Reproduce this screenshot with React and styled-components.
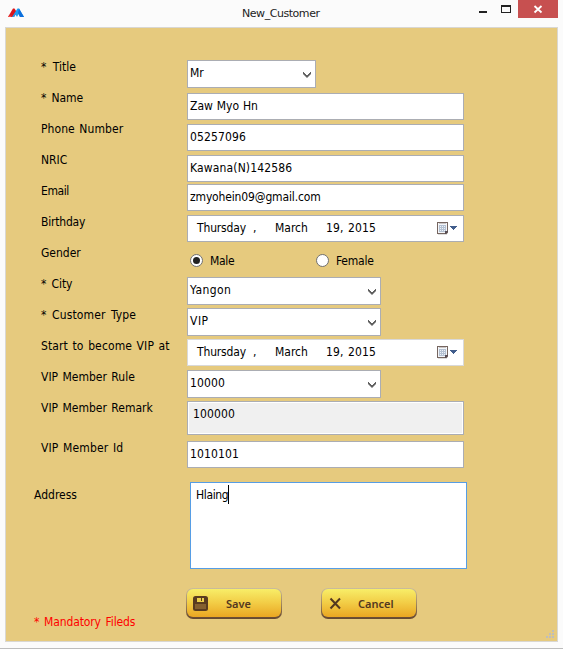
import React from 'react';
import styled, { createGlobalStyle } from 'styled-components';

const Global = createGlobalStyle`
  * { box-sizing: border-box; }
  body { margin: 0; background: #fbfbfb; overflow: hidden; }
  svg { display: block; flex: none; }
`;

const Window = styled.div`
  display: flex;
  flex-direction: column;
  width: 563px;
  height: 649px;
  background: #fbfbfb;
  border-bottom: 1px solid #bdbdbd;
  color: #000;
  font: 12px/16px 'DejaVu Sans Condensed', 'Noto Sans', sans-serif;
  white-space: pre;
`;
const TitleBar = styled.header`
  display: flex;
  align-items: flex-start;
  height: 27px;
  padding-left: 8px;
`;
const Logo = styled.svg`
  margin-top: 8px;
`;
const Caption = styled.h1`
  margin: 6px 0 0 218px;
  width: 216px;
  color: #222;
  font: 11px/16px 'DejaVu Sans', sans-serif;
  letter-spacing: -0.45px;
`;
const WindowButton = styled.div`
  width: ${(p) => p.$w}px;
  height: 18px;
  background: ${(p) => p.$bg || 'transparent'};
`;
const Form = styled.main`
  display: flex;
  flex-direction: column;
  width: 553px;
  height: 615px;
  margin-left: 5px;
  padding: 32px 0 0 28px;
  background: #e6ca7e;
  border: 1px solid #d9d7d2;
`;
const Row = styled.div`
  display: flex;
  align-items: flex-start;
  height: ${(p) => p.$h || 31}px;
`;
const Text = styled.span`
  letter-spacing: ${(p) => p.$ls || 0}px;
  word-spacing: ${(p) => p.$ws || 0}px;
`;
const Label = styled(Text)`
  width: ${(p) => (p.$outdent ? 156 : 146)}px;
  margin-left: ${(p) => (p.$outdent ? 0 : 7)}px;
  margin-top: ${(p) => (p.$outdent ? 5 : -1)}px;
`;
const Field = styled.div`
  display: flex;
  align-items: flex-start;
  width: ${(p) => p.$w || 277}px;
  height: ${(p) => p.$h || 27}px;
  margin-top: ${(p) => p.$dy || 0}px;
  padding: ${(p) => p.$pad || '4px 0 0 2px'};
  background: #fff;
  border: 1px solid ${(p) => p.$line || '#abadb3'};
`;
const ReadOnlyField = styled(Field)`
  background: #f0f0f0;
  box-shadow: inset 0 0 0 1px #fff;
`;
const Select = styled(Field)`
  justify-content: space-between;
`;
const Chevron = styled.svg`
  margin: 7px 4px 0 0;
`;
const DatePart = styled(Text)`
  width: ${(p) => p.$w}px;
`;
const Calendar = styled.svg`
  margin-top: 2px;
`;
const Choice = styled.div`
  display: flex;
  width: 126px;
  margin: 8px 0 0 3px;
  & + & { margin-left: 0; }
`;
const Radio = styled.span`
  display: grid;
  place-items: center;
  width: 13px;
  height: 13px;
  margin: 0 7px 0 0;
  border: 1px solid #707070;
  border-radius: 50%;
  background: #fff;
  &::after {
    content: '';
    width: 7px;
    height: 7px;
    border-radius: 50%;
    background: ${(p) => (p.$on ? '#222' : 'transparent')};
  }
`;
const ChoiceText = styled(Text)`
  margin-top: -1px;
`;
const AddressBox = styled(Field)`
  border-color: #569de5;
`;
const Caret = styled.i`
  width: 1px;
  height: 19px;
  margin-top: -2px;
  background: #000;
`;
const Footer = styled.footer`
  display: flex;
  align-items: flex-start;
  flex: 1;
  margin-top: 19px;
`;
const Note = styled(Text)`
  width: 152px;
  margin-top: 26px;
  color: #f00;
`;
const Button = styled.div`
  display: flex;
  align-items: center;
  width: 96px;
  height: 31px;
  margin-right: 39px;
  padding: 1px 1px 2px;
  border-radius: 7px;
  background: linear-gradient(#cbbd9b, #a2885f 50%, #65472f);
`;
const Face = styled.div`
  display: flex;
  align-items: center;
  width: 100%;
  height: 100%;
  padding-left: 6px;
  border-radius: 6px;
  background: linear-gradient(#f8ee68, #f2cc45 50%, #eaa622);
  color: #533820;
  font: 600 11px/16px 'Noto Sans', sans-serif;
`;
const ButtonText = styled(Text)`
  margin: 2px 0 0 ${(p) => p.$gap}px;
`;
const Grip = styled.svg`
  margin: 42px 0 0 auto;
`;

const Arrow = () => (
  <Chevron width="8" height="7" viewBox="0 0 8 7" fill="#606060">
    <path d="M0 0h1v1h1v1h1v1h2V2h1V1h1V0h1v2.600H7v1H6v1H5v1H3v-1H2v-1H1v-1H0z" />
  </Chevron>
);

const CalendarIcon = () => (
  <Calendar width="21" height="14" viewBox="0 0 21 14" shapeRendering="crispEdges">
    <rect x="1" y="12" width="9" height="1" fill="#ddd" />
    <rect x="0" y="0" width="11" height="12" fill="#75655f" />
    <rect x="1" y="1" width="9" height="10" fill="#f4f6f9" />
    <rect x="2" y="1" width="7" height="1" fill="#c9c5c5" />
    <rect x="2" y="3" width="7" height="7" fill="#b4c1d2" />
    <g fill="#eef2f8">
      {[3, 5, 7].flatMap((x) => [4, 6, 8].map((y) => <rect key={`${x}-${y}`} x={x} y={y} width="1" height="1" />))}
    </g>
    <path d="M8 11V9h3v1h-1v1H9v1H8z" fill="#574d55" />
    <path d="M10 11h1v1h-1z" fill="#ddd" />
    <path d="M13 4h7v1h-1v1h-1v1h-1v1h-1V7h-1V6h-1V5h-1z" fill="#415d8c" />
  </Calendar>
);

const DateField = ({ line }) => (
  <Field $line={line} $pad="4px 0 0 9px">
    <DatePart $w={56} $ls={-0.15}>Thursday</DatePart>
    <DatePart $w={22}>,</DatePart>
    <DatePart $w={51}>March</DatePart>
    <DatePart $w={111} $ls={0.15} $ws={0.8}>19, 2015</DatePart>
    <CalendarIcon />
  </Field>
);

export default function App() {
  return (
    <>
      <Global />
      <Window>
        <TitleBar>
          <Logo width="16" height="10" viewBox="0 0 16 10">
            <path d="M0 9 5 .5h1.500L9 4.500 6 9z" fill="#d9141b" />
            <path d="M2.500 9H0l.8-1.300H4z" fill="#f2504c" />
            <path d="M4 9 9.500.5H11L16 9h-4l-1.500-3L9 9 7.500 6.500 6 9z" fill="#1d9cf0" />
            <path d="M11 .5 16 9h-4l-2-4z" fill="#0e6fdc" />
          </Logo>
          <Caption>New_Customer</Caption>
          <WindowButton $w={60}>
            <svg width="60" height="18" shapeRendering="crispEdges">
              <rect x="21" y="11" width="8" height="2" fill="#222" />
              <path d="M43 5h10v8H43zm1 2v5h8V7z" fill="#222" fillRule="evenodd" />
            </svg>
          </WindowButton>
          <WindowButton $w={40} $bg="#c75050">
            <svg width="40" height="18">
              <path d="m16.500 6 7 6.500m0-6.500-7 6.500" stroke="#fff" strokeWidth="1.8" />
            </svg>
          </WindowButton>
        </TitleBar>
        <Form>
          <Row>
            <Label $ws={3}>* Title</Label>
            <Select $w={129} $h={28}><Text>Mr</Text><Arrow /></Select>
          </Row>
          <Row><Label $ws={2} $ls={-0.1}>* Name</Label><Field $dy={2}><Text $ws={0.5}>Zaw Myo Hn</Text></Field></Row>
          <Row><Label $ws={1} $ls={0.08}>Phone Number</Label><Field $dy={2}><Text $ls={0.15}>05257096</Text></Field></Row>
          <Row><Label>NRIC</Label><Field $dy={2}><Text $ls={0.15}>Kawana(N)142586</Text></Field></Row>
          <Row><Label $ls={-0.4}>Email</Label><Field><Text $ls={-0.15}>zmyohein09@gmail.com</Text></Field></Row>
          <Row><Label $ls={-0.2}>Birthday</Label><DateField /></Row>
          <Row>
            <Label>Gender</Label>
            <Choice><Radio $on /><ChoiceText $ls={-0.3}>Male</ChoiceText></Choice>
            <Choice><Radio /><ChoiceText $ls={-0.2}>Female</ChoiceText></Choice>
          </Row>
          <Row>
            <Label $ws={2} $ls={-0.1}>* City</Label>
            <Select $w={194} $h={28}><Text $ls={0.45}>Yangon</Text><Arrow /></Select>
          </Row>
          <Row>
            <Label $ws={2} $ls={0.12}>* Customer Type</Label>
            <Select $w={194} $h={28}><Text $ls={0.5}>VIP</Text><Arrow /></Select>
          </Row>
          <Row><Label $ws={1} $ls={0.12}>Start to become VIP at</Label><DateField line="#d9d9d9" /></Row>
          <Row>
            <Label $ws={1}>VIP Member Rule</Label>
            <Select $w={194} $h={28}><Text $ls={0.15}>10000</Text><Arrow /></Select>
          </Row>
          <Row $h={40}>
            <Label $ws={1}>VIP Member Remark</Label>
            <ReadOnlyField $h={34} $pad="4px 0 0 5px"><Text $ls={0.15}>100000</Text></ReadOnlyField>
          </Row>
          <Row $h={41}><Label $ws={1} $ls={0.15}>VIP Member Id</Label><Field><Text $ls={0.15}>1010101</Text></Field></Row>
          <Row $h={87}>
            <Label $outdent>Address</Label>
            <AddressBox $h={87} $pad="4px 0 0 5px"><Text $ls={-0.35}>Hlaing</Text><Caret /></AddressBox>
          </Row>
          <Footer>
            <Note $ws={1.5} $ls={-0.13}>* Mandatory Fileds</Note>
            <Button>
              <Face>
                <svg width="15" height="15" viewBox="0 0 15 15">
                  <rect width="15" height="15" rx="2.500" fill="#5a3c20" />
                  <path d="M4 2h7v4H4z" fill="#edcf4a" />
                  <path d="M8 2h1v3H8z" fill="#5a3c20" />
                  <path d="M2 8h11v5H2z" fill="#85602f" />
                </svg>
                <ButtonText $gap={18}>Save</ButtonText>
              </Face>
            </Button>
            <Button>
              <Face>
                <svg width="15" height="15" viewBox="0 0 15 15">
                  <path d="m2.500 2.500 9.500 10m0-10-9.500 10" stroke="#533820" strokeWidth="2" />
                </svg>
                <ButtonText $gap={15}>Cancel</ButtonText>
              </Face>
            </Button>
            <Grip width="11" height="9" fill="#bdbdbd" shapeRendering="crispEdges">
              <path d="M6 0h2v2H6zM3 3h2v2H3zM6 3h2v2H6zM0 6h2v2H0zM3 6h2v2H3zM6 6h2v2H6z" />
            </Grip>
          </Footer>
        </Form>
      </Window>
    </>
  );
}
